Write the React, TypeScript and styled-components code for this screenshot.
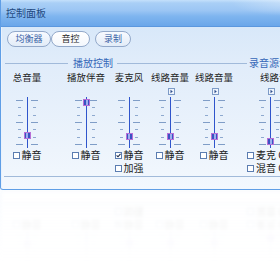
import React from "react";
import styled, { createGlobalStyle } from "styled-components";

const GlobalStyle = createGlobalStyle`
  html, body { margin: 0; padding: 0; background: #ffffff; overflow: hidden; }
  body { font-family: "Noto Sans CJK SC", "Noto Sans", sans-serif; }
`;

const FONT = `"Noto Sans CJK SC", "Noto Sans", sans-serif`;

const Stage = styled.div`
  width: 280px;
  height: 270px;
  overflow: hidden;
  background: #ffffff;
`;

const Window = styled.div`
  width: 320px;
  border-left: 1px solid #5f9ee6;
  border-bottom: 1px solid #5f9ee6;
  border-bottom-left-radius: 3px;
  overflow: hidden;
  background: linear-gradient(#cde2f8 0px, #d8e8f9 27px, #e0ecfa 60px, #edf4fc 150px, #f3f8fe 190px);
`;

const TitleBar = styled.div`
  height: 26px;
  border-bottom: 1px solid #5b97de;
  padding-left: 5px;
  font: 10px/26px ${FONT};
  color: #22497f;
  background:
    radial-gradient(ellipse 60px 14px at 290px 2px, rgba(255, 255, 255, 0.35), rgba(255, 255, 255, 0)),
    linear-gradient(#c4e0fb 0px, #a9cff6 3px, #9cc6f4 40%, #7fb5ef 62%, #6aa6ea 100%);
`;

const Body = styled.div`
  padding: 4px 0 12px 0;
  box-shadow: inset 1px 0 0 #e9f2fd;
`;

const TabBar = styled.div`
  display: flex;
  padding-left: 6px;
`;

const TabButton = styled.div<{ $w: number; $ml: number; $active?: boolean }>`
  flex: none;
  box-sizing: border-box;
  width: ${(p) => p.$w}px;
  height: 16px;
  margin-left: ${(p) => p.$ml}px;
  border: 1px solid #93a9ca;
  border-radius: 8px;
  background: ${(p) =>
    p.$active ? "linear-gradient(#ffffff, #f4f8fd)" : "linear-gradient(#f7faff, #e2ecf8)"};
  font: 9px/14px ${FONT};
  text-align: center;
  color: ${(p) => (p.$active ? "#2b2b2b" : "#3a62a6")};
`;

const Panel = styled.div`
  margin-top: 10px;
`;

const HeadingRow = styled.div`
  display: flex;
  align-items: center;
  height: 12px;
  padding-left: 4px;
`;

const Rule = styled.div<{ $w: number }>`
  flex: none;
  width: ${(p) => p.$w}px;
  height: 1px;
  background: #a1bada;
`;

const Heading = styled.div<{ $mx: string }>`
  flex: none;
  margin: ${(p) => p.$mx};
  font: 10px/12px ${FONT};
  color: #3567b8;
  white-space: nowrap;
`;

const Columns = styled.div`
  display: flex;
  align-items: flex-start;
  margin-top: 2px;
`;

const Column = styled.div<{ $ml: number }>`
  flex: none;
  width: 40px;
  margin-left: ${(p) => p.$ml}px;
  display: flex;
  flex-direction: column;
  align-items: center;
`;

const Label = styled.div<{ $indent?: number }>`
  height: 13px;
  font: 9.5px/13px ${FONT};
  color: #1e1e1e;
  white-space: nowrap;
  align-self: ${(p) => (p.$indent ? "flex-start" : "center")};
  margin-left: ${(p) => p.$indent ?? 0}px;
`;

const ArrowSlot = styled.div<{ $hidden?: boolean }>`
  margin-top: 4px;
  width: 7px;
  height: 7px;
  margin-left: 2px;
  visibility: ${(p) => (p.$hidden ? "hidden" : "visible")};
  svg { display: block; }
`;

const Slider = styled.div`
  position: relative;
  margin-top: 2px;
  display: flex;
  height: 51px;
`;

const Ticks = styled.div<{ $mr?: number; $ml?: number }>`
  width: 7px;
  box-sizing: border-box;
  padding: 3px 0;
  margin-right: ${(p) => p.$mr ?? 0}px;
  margin-left: ${(p) => p.$ml ?? 0}px;
  display: flex;
  flex-direction: column;
  justify-content: space-between;
  align-items: center;
`;

const Tick = styled.div<{ $long: boolean }>`
  width: ${(p) => (p.$long ? 7 : 3)}px;
  height: 1px;
  background: ${(p) => (p.$long ? "#7f9dc7" : "#8ea9cf")};
`;

const Track = styled.div`
  width: 1px;
  height: 51px;
  background: #2f55cc;
`;

const Thumb = styled.div`
  position: absolute;
  left: 8px;
  width: 7px;
  height: 7px;
  box-sizing: border-box;
  border: 1px solid #b86fd6;
  background: linear-gradient(90deg, #3953c2 0 30%, #9db0ee 30% 70%, #3953c2 70%);
`;

const CheckGroup = styled.div<{ $shift?: number }>`
  margin-top: 1px;
  display: flex;
  flex-direction: column;
  gap: 1px;
  align-self: ${(p) => (p.$shift !== undefined ? "flex-start" : "center")};
  margin-left: ${(p) => p.$shift ?? 0}px;
`;

const CheckRow = styled.label`
  display: flex;
  align-items: center;
  height: 12px;
  gap: 2px;
  font: 10px/12px ${FONT};
  color: #1a1a1a;
  white-space: nowrap;
`;

const Box = styled.span`
  flex: none;
  width: 7px;
  height: 7px;
  box-sizing: border-box;
  border: 1px solid #5b7db1;
  background: #ffffff;
  display: flex;
  svg { display: block; }
`;

const BottomRule = styled.div`
  margin: 2px 0 0 3px;
  height: 1px;
  background: #a1bada;
`;

const Reflection = styled.div`
  height: 80px;
  overflow: hidden;
  -webkit-mask-image: linear-gradient(rgba(0, 0, 0, 0.85), rgba(0, 0, 0, 0) 72px);
  mask-image: linear-gradient(rgba(0, 0, 0, 0.85), rgba(0, 0, 0, 0) 72px);
`;

const Mirror = styled.div`
  transform: scaleY(-1);
  opacity: 0.11;
  filter: blur(1.5px);
`;

type Check = { text: string; on?: boolean };
type Channel = {
  label: string;
  ml: number;
  value: number;
  arrow: boolean;
  labelIndent?: number;
  shift?: number;
  checks: Check[];
};

const channels: Channel[] = [
  { label: "总音量", ml: 6, value: 0.154, arrow: false, checks: [{ text: "静音" }] },
  { label: "播放伴音", ml: 19, value: 1, arrow: false, checks: [{ text: "静音" }] },
  { label: "麦克风", ml: 3, value: 0.128, arrow: false, checks: [{ text: "静音", on: true }, { text: "加强" }] },
  { label: "线路音量", ml: 1, value: 0.128, arrow: true, checks: [{ text: "静音" }] },
  { label: "线路音量", ml: 4, value: 0.128, arrow: true, checks: [{ text: "静音" }] },
  {
    label: "线路音量",
    ml: 16,
    value: 0,
    arrow: true,
    labelIndent: 10,
    shift: -3,
    checks: [{ text: "麦克 CD" }, { text: "混音 CD" }],
  },
];

const ArrowIcon = () => (
  <svg width="7" height="7" viewBox="0 0 7 7">
    <rect x="0.5" y="0.5" width="6" height="6" fill="#eef4fc" stroke="#7d9bc7" />
    <path d="M2.5 1.8 L4.8 3.5 L2.5 5.2 Z" fill="#2c4c8c" />
  </svg>
);

const CheckMark = () => (
  <svg width="5" height="5" viewBox="0 0 5 5">
    <path d="M0.6 2.4 L2 3.8 L4.5 0.9" fill="none" stroke="#1d2b4a" strokeWidth="1.1" />
  </svg>
);

const ChannelStrip = ({ ch }: { ch: Channel }) => {
  const top = 2 + (1 - ch.value) * 39;
  return (
    <Column $ml={ch.ml}>
      <Label $indent={ch.labelIndent}>{ch.label}</Label>
      <ArrowSlot $hidden={!ch.arrow}>
        <ArrowIcon />
      </ArrowSlot>
      <Slider>
        <Ticks $mr={4}>
          {[0, 1, 2, 3, 4, 5, 6].map((i) => (
            <Tick key={i} $long={i % 3 === 0} />
          ))}
        </Ticks>
        <Track />
        <Ticks $ml={3}>
          {[0, 1, 2, 3, 4, 5, 6].map((i) => (
            <Tick key={i} $long={i % 3 === 0} />
          ))}
        </Ticks>
        <Thumb style={{ top: `${Math.round(top)}px` }} />
      </Slider>
      <CheckGroup $shift={ch.shift}>
        {ch.checks.map((c, i) => (
          <CheckRow key={i}>
            <Box>{c.on ? <CheckMark /> : null}</Box>
            {c.text}
          </CheckRow>
        ))}
      </CheckGroup>
    </Column>
  );
};

const MixerWindow = () => (
  <Window>
    <TitleBar>控制面板</TitleBar>
    <Body>
      <TabBar>
        <TabButton $w={44} $ml={0}>均衡器</TabButton>
        <TabButton $w={39} $ml={0} $active>音控</TabButton>
        <TabButton $w={36} $ml={5}>录制</TabButton>
      </TabBar>
      <Panel>
        <HeadingRow>
          <Rule $w={63} />
          <Heading $mx="0 4px 0 5px">播放控制</Heading>
          <Rule $w={130} />
          <Heading $mx="0 0 0 2px">录音源设置</Heading>
        </HeadingRow>
        <Columns>
          {channels.map((ch, i) => (
            <ChannelStrip key={i} ch={ch} />
          ))}
        </Columns>
        <BottomRule />
      </Panel>
    </Body>
  </Window>
);

export default function App() {
  return (
    <Stage>
      <GlobalStyle />
      <MixerWindow />
      <Reflection aria-hidden="true">
        <Mirror>
          <MixerWindow />
        </Mirror>
      </Reflection>
    </Stage>
  );
}
